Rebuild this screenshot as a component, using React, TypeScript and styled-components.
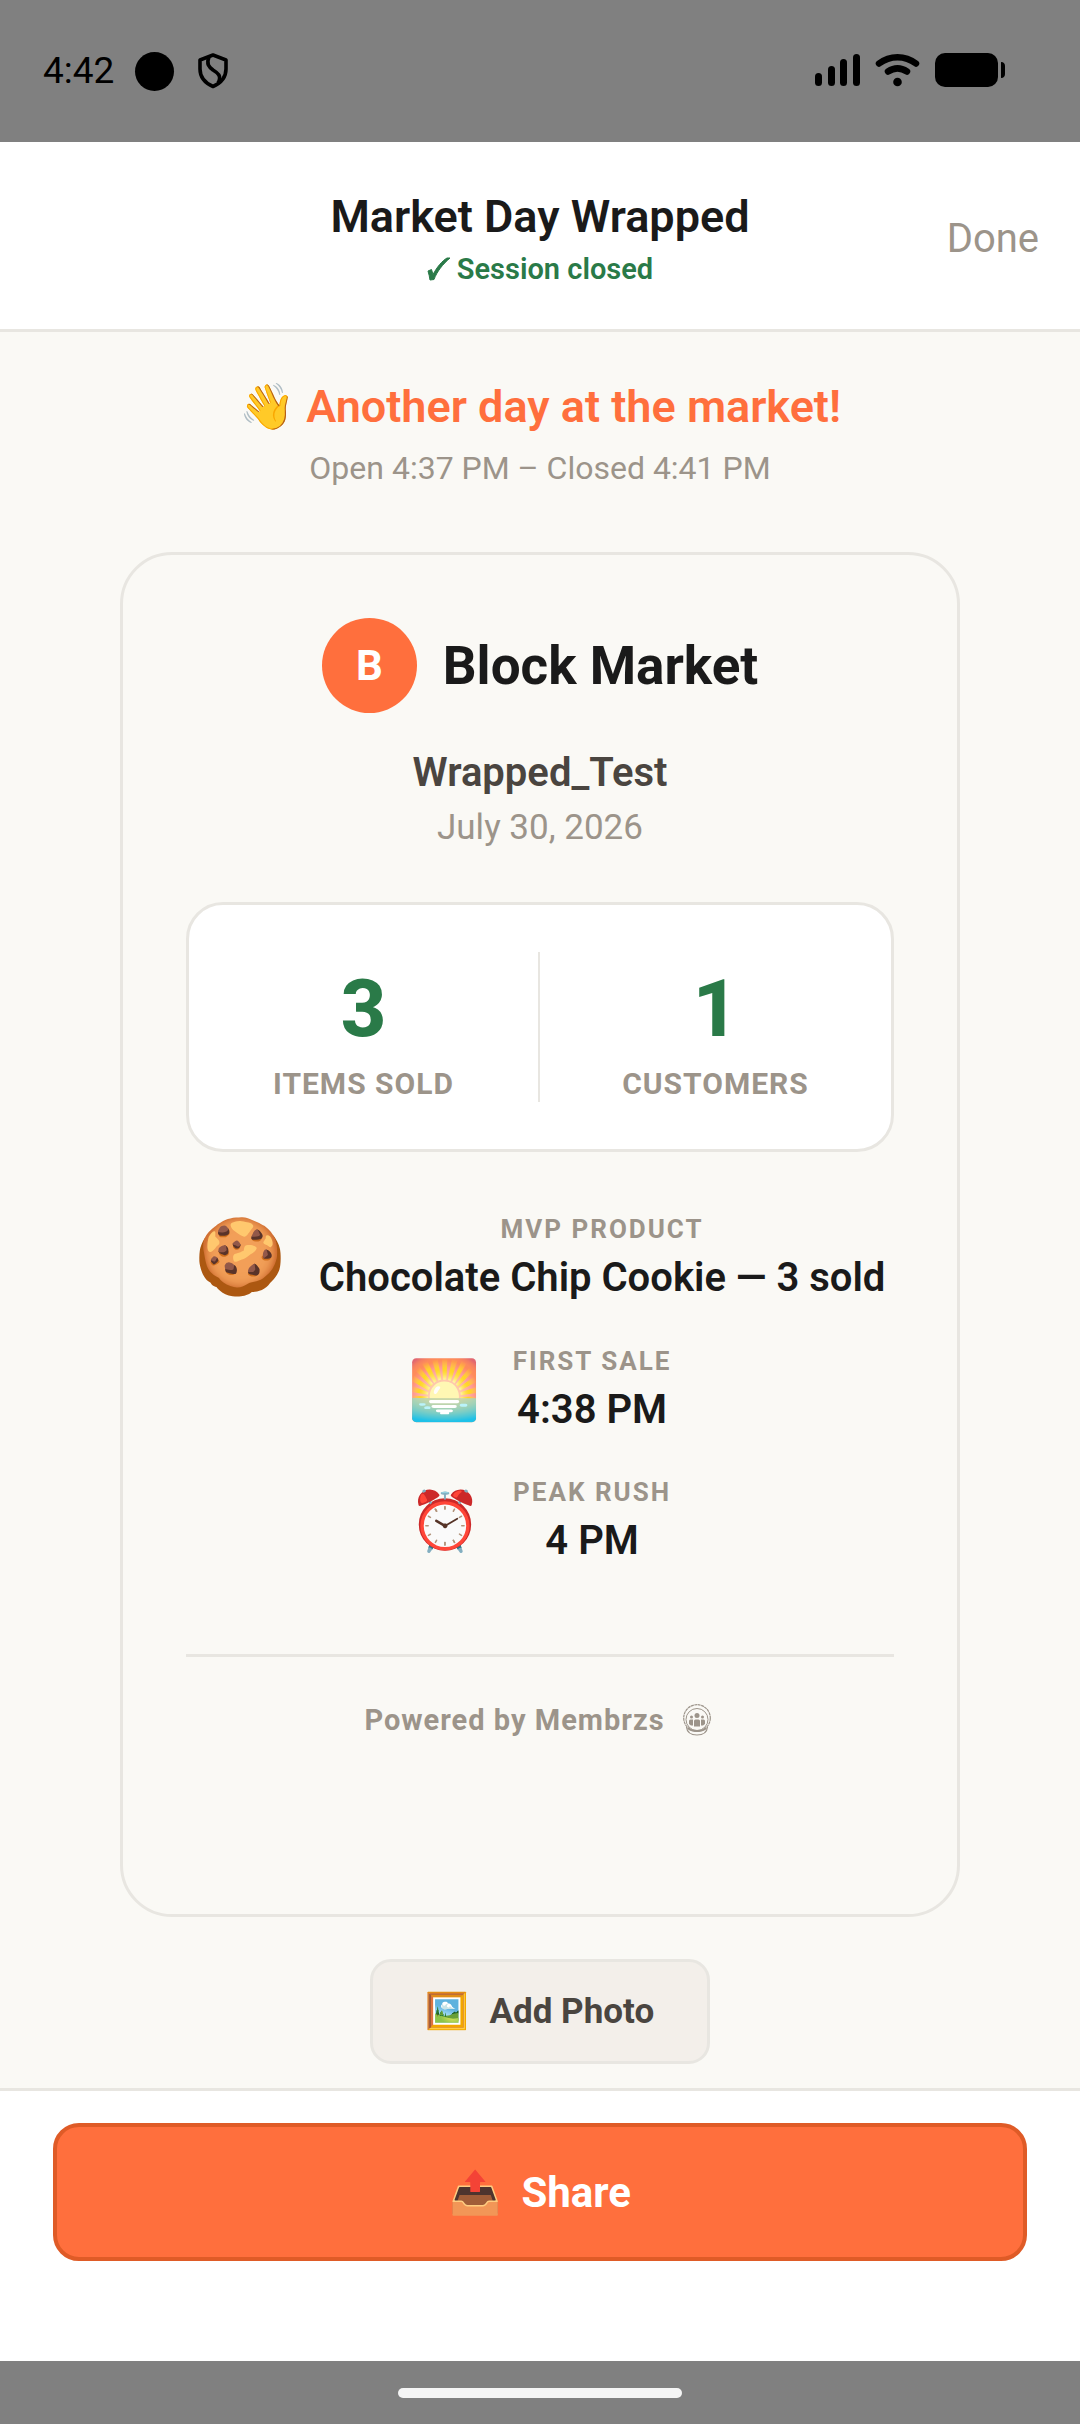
import styled, { createGlobalStyle } from 'styled-components';

const GlobalStyle = createGlobalStyle`
  * {
    box-sizing: border-box;
  }
  body {
    margin: 0;
    background: #faf9f5;
    color: #1a1a1a;
    font-family: Roboto, 'Noto Color Emoji', sans-serif;
  }
  h1, h2, h3, p, dl, dt, dd {
    margin: 0;
  }
  svg {
    display: block;
    flex: none;
  }
`;

const facts = [
  { icon: '🍪', label: 'MVP Product', value: 'Chocolate Chip Cookie — 3 sold', large: true },
  { icon: '🌅', label: 'First Sale', value: '4:38 PM', large: false },
  { icon: '⏰', label: 'Peak Rush', value: '4 PM', large: false },
];

export default function App() {
  return (
    <Page>
      <GlobalStyle />
      <StatusBar>
        <StatusGroup>
          <Clock>4:42</Clock>
          <Dot />
          <ShieldIcon />
        </StatusGroup>
        <StatusGroup>
          <SystemIcons />
        </StatusGroup>
      </StatusBar>

      <Header>
        <HeaderText>
          <HeaderTitle>Market Day Wrapped</HeaderTitle>
          <HeaderStatus>
            <CheckIcon />
            Session closed
          </HeaderStatus>
        </HeaderText>
        <DoneButton type="button">Done</DoneButton>
      </Header>

      <Main>
        <Greeting>👋 Another day at the market!</Greeting>
        <Hours>Open 4:37 PM – Closed 4:41 PM</Hours>

        <Card>
          <Brand>
            <Avatar>B</Avatar>
            <BrandName>Block Market</BrandName>
          </Brand>
          <SessionName>Wrapped_Test</SessionName>
          <SessionDate>July 30, 2026</SessionDate>

          <Stats>
            <Stat>
              <StatValue>3</StatValue>
              <StatLabel>ITEMS SOLD</StatLabel>
            </Stat>
            <Stat>
              <StatValue>1</StatValue>
              <StatLabel>CUSTOMERS</StatLabel>
            </Stat>
          </Stats>

          <Facts>
            {facts.map((fact) => (
              <Fact key={fact.label}>
                <FactIcon $large={fact.large}>{fact.icon}</FactIcon>
                <div>
                  <FactLabel>{fact.label}</FactLabel>
                  <FactValue>{fact.value}</FactValue>
                </div>
              </Fact>
            ))}
          </Facts>

          <Powered>
            Powered by Membrzs
            <MembrzsLogo />
          </Powered>
        </Card>

        <PhotoButton type="button">
          <span>🖼️</span>
          Add Photo
        </PhotoButton>
      </Main>

      <Footer>
        <ShareButton type="button">
          <span>📤</span>
          Share
        </ShareButton>
      </Footer>
      <NavBar>
        <NavHandle />
      </NavBar>
    </Page>
  );
}

function ShieldIcon() {
  return (
    <svg width="30" height="36" viewBox="0 0 30 36" fill="none" stroke="#000" strokeWidth="3.600" strokeLinejoin="round">
      <path d="M15 2 L28 7 V16 C28 24 23 30 15 33.500 C7 30 2 24 2 16 V7 Z" />
      <path d="M11 4 C8 11 11 14 15 17 C20 20 24 23 20 30" />
    </svg>
  );
}

function SystemIcons() {
  return (
    <svg width="190" height="36" viewBox="0 0 190 36">
      <rect x="0" y="20" width="7" height="13" rx="3.500" />
      <rect x="13" y="13" width="7" height="20" rx="3.500" />
      <rect x="25" y="6" width="7" height="27" rx="3.500" />
      <rect x="38" y="1" width="7" height="32" rx="3.500" />
      <g fill="none" stroke="#000" strokeWidth="6.500" strokeLinecap="round">
        <path d="M64 10.500 C75 2 90 2 101 10.500" />
        <path d="M73 18.500 C79 14.500 86 14.500 92 18.500" />
      </g>
      <circle cx="82.500" cy="29" r="4.300" />
      <rect x="120" y="0" width="63" height="34" rx="10" />
      <path d="M186 9 C189 9 190 11 190 13 V21 C190 23 189 25 186 25 Z" />
    </svg>
  );
}

function CheckIcon() {
  return (
    <svg width="24" height="24" viewBox="0 0 24 24" fill="#2a7a48" stroke="#2a7a48" strokeLinejoin="round">
      <path d="M1 14 L4.500 12.500 L6 17.500 C10 10 15 4 20 1 H23 C15.500 7.500 10 14.500 7 22.500 L3 23 C2.500 20 2 17 1 14 Z" />
    </svg>
  );
}

function MembrzsLogo() {
  return (
    <svg width="28" height="32" viewBox="0 0 28 32" fill="none" stroke="#9c948a">
      <circle cx="14" cy="14" r="13.300" strokeWidth="1.200" strokeDasharray="3 0.500" />
      <circle cx="14" cy="15.500" r="11" />
      <path d="M3.500 23 C4 28 8 31 14 31 C20 31 24 28 24.500 23" strokeWidth="1.200" />
      <path d="M5 24 C8 28 20 28 23 24" strokeWidth="2" />
      <g fill="#9c948a" stroke="none">
        <circle cx="14" cy="11.500" r="2.500" />
        <circle cx="8.500" cy="13" r="1.500" />
        <circle cx="19.500" cy="13" r="1.500" />
        <path d="M11 22.500 V17 Q11 15.500 12.500 15.500 H15.500 Q17 15.500 17 17 V22.500 Z" />
        <path d="M6 20 V17 Q6 15.500 7.500 15.500 H10 V21.500 H8 Z" />
        <path d="M22 20 V17 Q22 15.500 20.500 15.500 H18 V21.500 H20 Z" />
      </g>
    </svg>
  );
}

const Page = styled.div`
  display: flex;
  flex-direction: column;
  min-height: 100vh;
`;

const StatusBar = styled.div`
  display: flex;
  justify-content: space-between;
  align-items: center;
  height: 142px;
  padding: 0 75px 0 43px;
  background: #808080;
`;

const StatusGroup = styled.div`
  display: flex;
  align-items: center;
`;

const Clock = styled.span`
  font-size: 37px;
  line-height: 44px;
  color: #000;
`;

const Dot = styled.span`
  width: 39px;
  height: 39px;
  margin: 0 24px 0 21px;
  border-radius: 50%;
  background: #000;
`;

const Header = styled.header`
  display: grid;
  grid-template-columns: 1fr auto 1fr;
  align-items: center;
  padding: 48px 41px 42px;
  border-bottom: 3px solid #e8e6e1;
  background: #fff;
`;

const HeaderText = styled.div`
  display: flex;
  flex-direction: column;
  align-items: center;
  grid-column: 2;
  gap: 7px;
`;

const HeaderTitle = styled.h1`
  font-size: 45px;
  line-height: 54px;
  font-weight: 600;
`;

const HeaderStatus = styled.p`
  display: flex;
  align-items: center;
  gap: 6px;
  font-size: 29px;
  line-height: 36px;
  font-weight: 600;
  color: #2a7a48;
`;

const DoneButton = styled.button`
  justify-self: end;
  padding: 0;
  border: none;
  background: none;
  font: 400 40px/46px Roboto, sans-serif;
  color: #9c948a;
  cursor: pointer;
`;

const Main = styled.main`
  display: flex;
  flex: 1;
  flex-direction: column;
  align-items: center;
  padding: 49px 120px 24px;
`;

const Greeting = styled.h2`
  font-size: 45px;
  line-height: 52px;
  font-weight: 600;
  color: #ff6f3d;
`;

const Hours = styled.p`
  margin-top: 16px;
  font-size: 32px;
  line-height: 38px;
  color: #9c948a;
`;

const Card = styled.section`
  display: flex;
  flex-direction: column;
  align-items: center;
  align-self: stretch;
  margin-top: 65px;
  padding: 63px 63px 177px;
  border: 3px solid #e8e6e1;
  border-radius: 52px;
`;

const Brand = styled.div`
  display: flex;
  align-items: center;
  gap: 26px;
`;

const Avatar = styled.span`
  display: flex;
  justify-content: center;
  align-items: center;
  width: 95px;
  height: 95px;
  border-radius: 50%;
  background: #ff6f3d;
  font-size: 42px;
  font-weight: 700;
  color: #fff;
`;

const BrandName = styled.h3`
  font-size: 53px;
  line-height: 62px;
  font-weight: 700;
`;

const SessionName = styled.p`
  margin-top: 37px;
  font-size: 40px;
  line-height: 46px;
  font-weight: 600;
  color: #4a4540;
`;

const SessionDate = styled.p`
  margin-top: 11px;
  font-size: 35px;
  line-height: 42px;
  color: #9c948a;
`;

const Stats = styled.div`
  display: grid;
  grid-template-columns: 1fr 1fr;
  align-self: stretch;
  margin-top: 53px;
  padding: 47px 0;
  border: 3px solid #e8e6e1;
  border-radius: 37px;
  background: #fff;
`;

const Stat = styled.div`
  display: flex;
  flex-direction: column;
  align-items: center;

  &:first-child {
    border-right: 2px solid #e8e6e1;
  }
`;

const StatValue = styled.span`
  font-size: 79px;
  line-height: 114px;
  font-weight: 800;
  color: #2a7a48;
`;

const StatLabel = styled.span`
  font-size: 30px;
  line-height: 36px;
  font-weight: 700;
  letter-spacing: 1px;
  color: #9c948a;
`;

const Facts = styled.dl`
  display: flex;
  flex-direction: column;
  align-items: center;
  gap: 44px;
  margin-top: 60px;
`;

const Fact = styled.div`
  display: flex;
  align-items: center;
  gap: 32px;
  text-align: center;
`;

const FactIcon = styled.span<{ $large: boolean }>`
  font-size: ${(p) => (p.$large ? '74px' : '58px')};
  line-height: ${(p) => (p.$large ? '90px' : '70px')};
`;

const FactLabel = styled.dt`
  margin-bottom: 11px;
  font-size: 26px;
  line-height: 30px;
  font-weight: 700;
  letter-spacing: 2px;
  text-transform: uppercase;
  color: #9c948a;
`;

const FactValue = styled.dd`
  font-size: 40px;
  line-height: 46px;
  font-weight: 600;
`;

const Powered = styled.p`
  display: flex;
  justify-content: center;
  align-items: center;
  align-self: stretch;
  gap: 18px;
  margin-top: 90px;
  padding: 46px 5px 0 0;
  border-top: 3px solid #e8e6e1;
  font-size: 29px;
  line-height: 34px;
  font-weight: 700;
  letter-spacing: 1px;
  color: #9c948a;
`;

const PhotoButton = styled.button`
  display: flex;
  align-items: center;
  gap: 20px;
  height: 105px;
  margin-top: 42px;
  padding: 0 53px;
  border: 3px solid #e8e6e1;
  border-radius: 21px;
  background: #f3efea;
  font: 700 35px/40px Roboto, 'Noto Color Emoji', sans-serif;
  color: #4a4540;
  cursor: pointer;
`;

const Footer = styled.footer`
  padding: 32px 53px 100px;
  border-top: 3px solid #e8e6e1;
  background: #fff;
`;

const ShareButton = styled.button`
  display: flex;
  justify-content: center;
  align-items: center;
  gap: 20px;
  width: 100%;
  height: 138px;
  padding: 2px 0 0;
  border: 4px solid #df5b27;
  border-radius: 26px;
  background: #ff6f3d;
  font: 700 42px/48px Roboto, 'Noto Color Emoji', sans-serif;
  color: #fff;
  cursor: pointer;
`;

const NavBar = styled.div`
  display: flex;
  justify-content: center;
  padding: 27px 0 26px;
  background: #808080;
`;

const NavHandle = styled.div`
  width: 284px;
  height: 10px;
  border-radius: 5px;
  background: #f5f5f5;
`;
